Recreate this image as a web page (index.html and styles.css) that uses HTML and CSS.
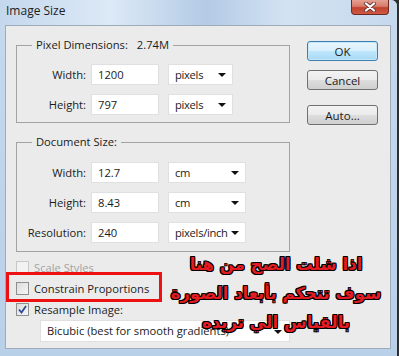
FILE: index.html
```html
<!DOCTYPE html>
<html lang="en">
<head>
    <meta charset="UTF-8">
    <title>Image Size</title>
    <link rel="stylesheet" href="styles.css">
</head>
<body>
    <div class="window">
        <div class="titlebar">
            <span class="title">Image Size</span>
            <span class="close">
                <svg width="14" height="10" viewBox="0 0 14 10">
                    <path d="M3 1.5 L11 8.5 M11 1.5 L3 8.5" stroke="#6b3a33" stroke-width="4" stroke-linecap="round"/>
                    <path d="M3 1.5 L11 8.5 M11 1.5 L3 8.5" stroke="#fff" stroke-width="2.2" stroke-linecap="round"/>
                </svg>
            </span>
        </div>

        <div class="client">
            <div class="main">
                <fieldset class="group pixel">
                    <legend>Pixel Dimensions: <span class="size">2.74M</span></legend>
                    <div class="rows">
                        <label>Width:</label>
                        <div class="field">1200</div>
                        <div class="select">pixels<i class="arrow"></i></div>

                        <label>Height:</label>
                        <div class="field">797</div>
                        <div class="select">pixels<i class="arrow"></i></div>
                    </div>
                </fieldset>

                <fieldset class="group doc">
                    <legend>Document Size:</legend>
                    <div class="rows wide">
                        <label>Width:</label>
                        <div class="field">12.7</div>
                        <div class="select">cm<i class="arrow"></i></div>

                        <label>Height:</label>
                        <div class="field">8.43</div>
                        <div class="select">cm<i class="arrow"></i></div>

                        <label>Resolution:</label>
                        <div class="field">240</div>
                        <div class="select">pixels/inch<i class="arrow"></i></div>
                    </div>
                </fieldset>

                <div class="checks">
                    <div class="check-row disabled"><span class="box"></span>Scale Styles</div>
                    <div class="check-row"><span class="box"></span>Constrain Proportions</div>
                    <div class="check-row">
                        <span class="box">
                            <svg width="9" height="9" viewBox="0 0 9 9">
                                <path d="M1 4.5 L3.5 7.5 L8 1" fill="none" stroke="#2a4a9a" stroke-width="1.8"/>
                            </svg>
                        </span>Resample Image:
                    </div>
                </div>

                <div class="select resample">Bicubic (best for smooth gradients)<i class="arrow"></i></div>
            </div>

            <div class="actions">
                <button class="default">OK</button>
                <button>Cancel</button>
                <button class="auto">Auto...</button>
            </div>
        </div>

        <!-- annotation drawn over the dialog -->
        <div class="highlight"></div>
        <div class="note" dir="rtl">
            <div>اذا شلت الصح من هنا</div>
            <div>سوف تتحكم بأبعاد الصورة</div>
            <div>بالقياس الي تريده</div>
        </div>
    </div>
</body>
</html>
```

FILE: styles.css
```css
body {
    margin: 0;
    background-color: #2e2e2e;
    font-family: "Open Sans", Arial, sans-serif;
    font-size: 11.2px;
    color: #1b1b1b;
}

.window {
    position: relative;
    width: 397px;
    height: 356px;
    background: linear-gradient(to bottom, #c6d9ed, #b9d0e9);
    border-radius: 0 6px 0 0;
    overflow: hidden;
}

.titlebar {
    height: 25px;
    display: flex;
    justify-content: space-between;
    align-items: flex-start;
    padding: 0 8px 0 6px;
    background: linear-gradient(90deg, #c4d8ed 0%, #dce9f6 28%, #b3cbe5 52%, #d3e2f2 72%, #c6d9ed 100%);
}

.title {
    line-height: 22px;
    font-size: 12px;
    color: #1e1e1e;
}

.close {
    width: 38px;
    height: 15px;
    display: flex;
    justify-content: center;
    align-items: center;
    box-sizing: border-box;
    border: 1px solid #6e2a22;
    border-top: none;
    border-radius: 0 0 4px 4px;
    background: linear-gradient(to bottom, #e4a192 0%, #d77b6c 45%, #c2412f 55%, #cf5a44 100%);
}

.client {
    display: flex;
    width: 386px;
    height: 324px;
    margin-left: 5px;
    box-sizing: border-box;
    border: 1px solid #9eabb9;
    background-color: #ebebeb;
}

.main {
    width: 274px;
    padding-left: 10px;
}

.group {
    margin: 11px 0 0 0;
    padding: 0;
    border: 1px solid #a2a2a2;
    min-width: 0;
}

.group legend {
    margin-left: 15px;
    padding: 0 4px;
    line-height: 16px;
    color: #1b1b1b;
}

.size {
    margin-left: 6px;
}

.rows {
    display: grid;
    grid-template-columns: 69px 68px 69px;
    grid-auto-rows: 21px;
    column-gap: 5px;
    row-gap: 9px;
    align-items: center;
    padding: 11px 0 7px 0;
}

.rows label {
    text-align: right;
}

.rows .select {
    margin-left: 4px;
}

.rows.wide {
    grid-template-columns: 69px 68px 82px;
    padding: 12px 0 8px 0;
}

.doc {
    margin-top: 11px;
}

.field,
.select {
    height: 21px;
    box-sizing: border-box;
    border: 1px solid #e0e0e0;
    background-color: #fff;
    padding-left: 6px;
    line-height: 19px;
    white-space: nowrap;
}

.select {
    position: relative;
    letter-spacing: -0.3px;
}

.arrow {
    position: absolute;
    right: 6px;
    top: 8px;
    width: 0;
    height: 0;
    border-left: 4px solid transparent;
    border-right: 4px solid transparent;
    border-top: 4px solid #111;
}

.checks {
    margin-top: 5px;
}

.check-row {
    display: flex;
    align-items: center;
    height: 21px;
    gap: 5px;
}

.check-row.disabled {
    color: #a3a3a3;
}

.box {
    width: 11px;
    height: 11px;
    border: 1px solid #8e8f8f;
    background: linear-gradient(135deg, #dcdcdc, #f6f6f6);
    display: flex;
    justify-content: center;
    align-items: center;
}

.disabled .box {
    border-color: #c8c8c8;
    background: #f2f2f2;
}

.resample {
    width: 250px;
    height: 22px;
    margin: 0 0 0 24px;
    line-height: 20px;
    letter-spacing: 0;
}

.resample .arrow {
    top: 9px;
    right: 7px;
}

.actions {
    display: flex;
    flex-direction: column;
    margin: 15px 0 0 17px;
}

button {
    width: 71px;
    height: 20px;
    padding: 0;
    font-family: "Open Sans", Arial, sans-serif;
    font-size: 11.5px;
    color: #1b1b1b;
    border: 1px solid #707070;
    border-radius: 3px;
    background: linear-gradient(to bottom, #f3f3f3 0%, #ebebeb 48%, #dddddd 52%, #cfcfcf 100%);
    margin-bottom: 9px;
}

button.default {
    border-color: #3c7fb1;
    background: linear-gradient(to bottom, #eaf6fd 0%, #d9f0fc 48%, #bee6fd 52%, #a7d9f5 100%);
    box-shadow: inset 0 0 0 1px #c4e8fa;
}

button.auto {
    margin-top: 6px;
}

.highlight {
    position: absolute;
    left: 6px;
    top: 272px;
    width: 150px;
    height: 24px;
    border: 3px solid #ee1111;
}

.note {
    position: absolute;
    left: 150px;
    top: 250px;
    width: 252px;
    text-align: center;
    white-space: nowrap;
    font-family: "DejaVu Sans", sans-serif;
    font-weight: bold;
    font-size: 16.5px;
    line-height: 29px;
    color: #e41b22;
    text-shadow: 1px 0 0 #000, -1px 0 0 #000, 0 1px 0 #000, 0 -1px 0 #000,
        1px 1px 0 #000, -1px -1px 0 #000, 1px -1px 0 #000, -1px 1px 0 #000;
}
```
